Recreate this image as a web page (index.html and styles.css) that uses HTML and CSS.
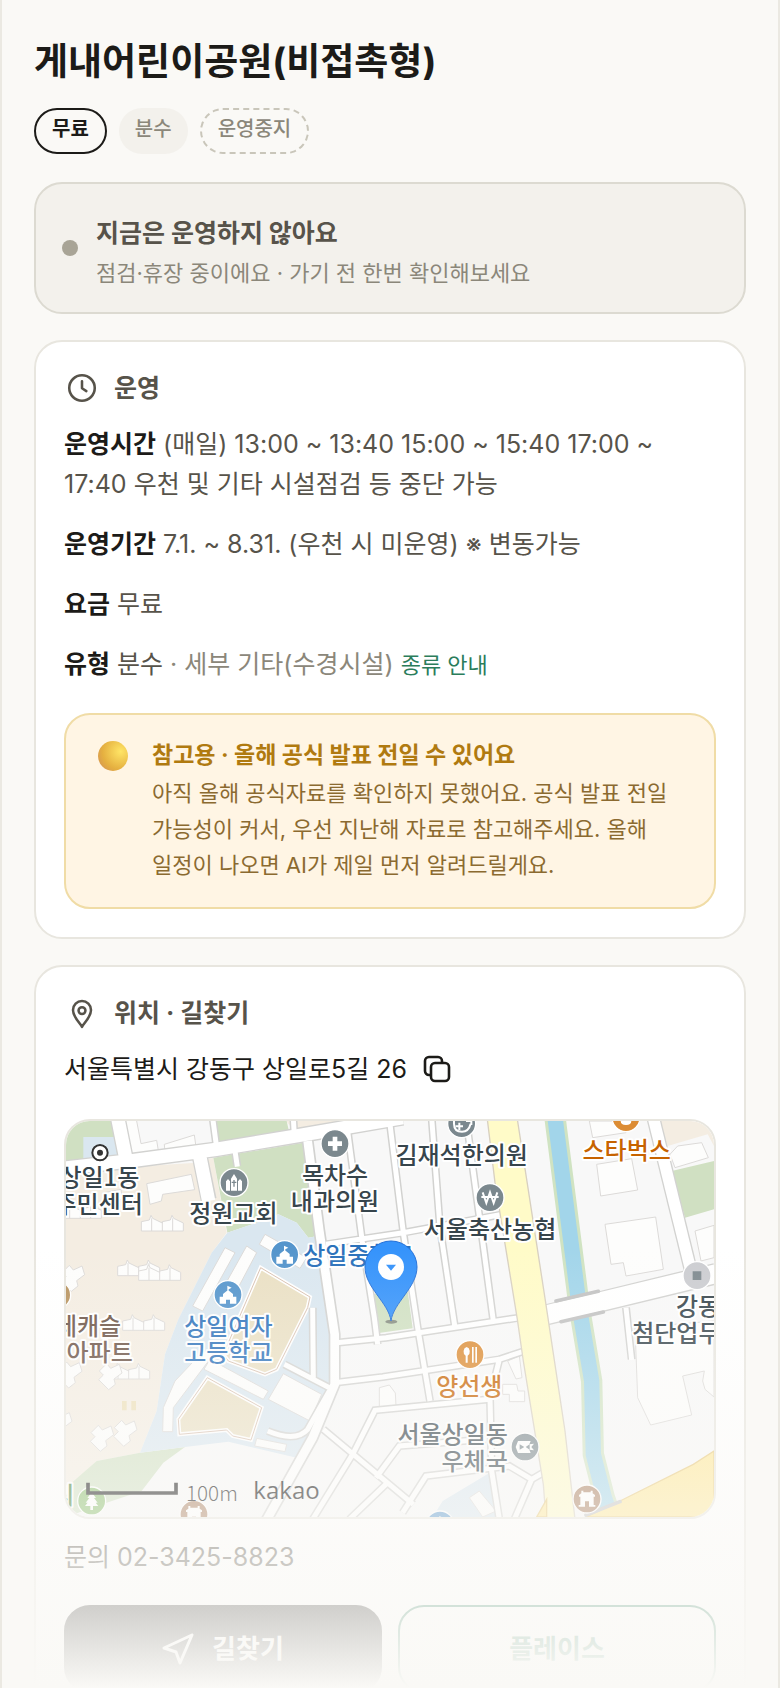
FILE: index.html
```html
<!DOCTYPE html>
<html lang="ko">
<head>
    <meta charset="UTF-8">
    <meta name="viewport" content="width=device-width, initial-scale=1.0">
    <title>게내어린이공원(비접촉형)</title>
    <link rel="stylesheet" href="styles.css">
</head>
<body>
    <main class="page">
        <h1>게내어린이공원(비접촉형)</h1>
        <div class="tags">
            <span class="tag tag-free">무료</span>
            <span class="tag tag-type">분수</span>
            <span class="tag tag-closed">운영중지</span>
        </div>

        <!-- Current status -->
        <section class="status">
            <span class="status-dot"></span>
            <div>
                <h2 class="status-title">지금은 운영하지 않아요</h2>
                <p class="status-text">점검·휴장 중이에요 · 가기 전 한번 확인해보세요</p>
            </div>
        </section>

        <!-- Opening info -->
        <section class="card">
            <h2 class="card-title">
                <svg class="icon" viewBox="0 0 24 24"><circle cx="12" cy="12" r="8.5"/><path d="M12 7.5v4.7l2.9 1.9"/></svg>
                운영
            </h2>
            <p class="row"><b>운영시간</b> (매일) 13:00 ~ 13:40 15:00 ~ 15:40 17:00 ~ 17:40 우천 및 기타 시설점검 등 중단 가능</p>
            <p class="row"><b>운영기간</b> 7.1. ~ 8.31. (우천 시 미운영) ※ 변동가능</p>
            <p class="row"><b>요금</b> 무료</p>
            <p class="row"><b>유형</b> 분수 <span class="muted">· 세부 기타(수경시설)</span> <a class="type-link" href="#types">종류 안내</a></p>

            <div class="notice">
                <span class="orb"></span>
                <div>
                    <h3 class="notice-title">참고용 · 올해 공식 발표 전일 수 있어요</h3>
                    <p class="notice-text">아직 올해 공식자료를 확인하지 못했어요. 공식 발표 전일 가능성이 커서, 우선 지난해 자료로 참고해주세요. 올해 일정이 나오면 AI가 제일 먼저 알려드릴게요.</p>
                </div>
            </div>
        </section>

        <!-- Location -->
        <section class="card">
            <h2 class="card-title">
                <svg class="icon" viewBox="0 0 24 24"><path d="M12 21.2c-1.6-2.8-6-6.6-6-11.2a6 6 0 0 1 12 0c0 4.6-4.4 8.4-6 11.2z"/><circle cx="12" cy="10.4" r="2.3"/></svg>
                위치 · 길찾기
            </h2>
            <div class="address">
                <span>서울특별시 강동구 상일로5길 26</span>
                <button class="copy" type="button" aria-label="주소 복사">
                    <svg viewBox="0 0 28 28"><path d="M7.5 20H6a4 4 0 0 1-4-4V6a4 4 0 0 1 4-4h9a4 4 0 0 1 4 4v1.5"/><rect x="8" y="8" width="18" height="18" rx="4"/></svg>
                </button>
            </div>

            <div class="map">
                <svg viewBox="0 0 1944 1188" preserveAspectRatio="xMidYMid slice" role="img" aria-label="지도">
                    <defs>
                        <g id="church"><path d="M-24 24V-4l6-7 6 7v28zM12 24V-4l6-7 6 7v28zM-9 24v-36l9-14 9 14v36z"/></g>
                        <g id="school"><path d="M-25 24V3h10v-8L0-17 15-5V3h10v21H6V12H-6v12zM-2-15v-15l13 6-9 5v4z"/></g>
                        <g id="house"><path d="M-25 23v-5h5V-7h-4v-5l7-5v-8h6v5h22v-5h6v8l7 5v5h-4v25h5v5H6V7H-6v16z"/></g>
                        <path id="homes" d="M0 30V2l24-5 5-14 5 9 29 14V2l24-5 5-14 5 9 29 14v24zM31-8v38M63 2v28M94-8v38"/>
                        <path id="cross-home" d="M0 15l22-22 12 14 26-12 8 26-24 18 4 16-20 16-30-30 14-14z"/>
                    </defs>

                    <rect class="ground" width="1944" height="1188"/>

                    <!-- Land use -->
                    <path class="beige" d="M0 150L392 125 442 110 482 335 437 395 337 595 297 700 272 870 222 995 92 1020 0 1110zM660 0H892L690 35zM1777 0H1944V75L1925 40 1805 75z"/>
                    <path class="green" d="M0 0H137L157 115 0 130zM437 0H662L670 35 452 70zM442 110L712 65 755 345 727 350 692 305 637 280 572 305 484 335zM357 978L222 995 92 1020 0 1100V1188L122 1145 227 1110 292 1025zM915 520L1025 510 1040 622 938 636zM1817 150L1944 120V265L1857 290z"/>
                    <path class="blue" d="M52 48H145L157 120 52 125zM484 335L572 305 637 280 692 305 727 350 755 345 802 615 812 790 780 860 692 1010 487 962 357 978 222 995 272 870 297 700 337 595 437 395zM1100 1188L1130 1140 1280 1050 1290 1188z"/>

                    <!-- Buildings -->
                    <g class="building">
                        <path d="M170 0L200 108 278 95 272 58 225 68 212 0M295 70L385 42 390 78 297 95zM242 188L376 160 386 206 290 220 286 240 252 250zM115 215L165 205 168 235 120 245z"/>
                        <path d="M477 380L507 395 410 570 380 555zM542 375L572 395 482 565 447 545zM597 340L722 410 702 442 580 370zM412 690L327 780 292 860 290 932H320L322 860 450 690zM432 715L607 810 592 835 414 745zM652 758L767 820 732 900 607 835zM572 952L662 970 657 992 566 975z"/>
                        <path d="M1592 130L1697 113 1715 207 1604 225zM1617 310L1769 288 1792 445 1680 465 1672 425 1635 430zM1570 0L1580 50 1680 35 1670 0zM1812 100L1835 75 1907 65 1927 110 1827 140zM1887 330L1944 313V410L1905 420zM1707 620L1715 830 1754 912 1877 882 1850 765 1915 750 1910 780 1917 805 1944 828V600z"/>
                        <path d="M1310 790h42l4 20h20v32h-46v-22h-20zM1325 720l35-16 8 66-18 4zM940 800l30-8 18 24 2 40-50 8zM1210 1130l30-20 50 60-40 18z"/>
                    </g>
                    <g class="building">
                        <use href="#homes" x="226" y="300"/>
                        <use href="#homes" x="155" y="434"/>
                        <use href="#homes" x="218" y="448"/>
                        <use href="#homes" x="-20" y="262"/>
                        <use href="#homes" x="170" y="598"/>
                        <use href="#homes" x="125" y="744"/>
                        <use href="#cross-home" x="100" y="735"/>
                        <use href="#cross-home" x="-12" y="440"/>
                        <use href="#cross-home" x="-20" y="730"/>
                        <use href="#cross-home" x="-50" y="880"/>
                        <use href="#cross-home" x="75" y="920"/>
                        <use href="#cross-home" x="145" y="905"/>
                    </g>
                    <path class="bench" d="M168 840h14v28h-14zM196 840h14v28h-14z"/>

                    <!-- School fields -->
                    <g class="field">
                        <path d="M584 440L732 528 725 560 632 745 597 760 487 720 472 700z"/>
                        <path d="M424 770L587 860 555 957 500 945 482 927 340 940 337 895z"/>
                    </g>
                    <g class="field-line">
                        <path d="M584 440L732 528 725 560 632 745 597 760 487 720 472 700z"/>
                        <path d="M424 770L587 860 555 957 500 945 482 927 340 940 337 895z"/>
                    </g>

                    <!-- Roads: grey casing first, white surface on top -->
                    <g class="casing">
                        <path stroke-width="48" d="M-10 142L190 120 450 85 690 45 1010-10M155-10L182 125M402 110L428 236"/>
                        <path stroke-width="36" d="M725 60L760 330 806 640V790L740 950 600 1200"/>
                        <path stroke-width="24" d="M440-10L452 80M682-10L685 45M507 90L514 135M845 30L890 370 925 590 935 670M972 10L1012 335 1055 620 1092 840M1097-10L1122 320 1167 620M1200-10L1242 300 1282 600M780 370L1012 335 1310 280M812 665L960 650 1360 590M805 785L950 768 1300 715 1375 690M740 1195L860 1000 927 868 1270 835M772 925L1042 1150M1300 715L1272 830 1277 1050 1300 1195M930 1070L1000 975 1260 955M1010 1175L1080 1065 1330 1035 1397 1075 1440 1050M1397 1075L1345 1195M965 1085L850 1195M1680 560L1697 715M740 560L742 780M655 730L790 800M605 930Q690 965 725 925L790 810"/>
                        <path stroke-width="64" d="M1440 582L1950 458"/>
                        <path stroke-width="42" d="M1762-10L1875 450"/>
                    </g>
                    <g class="road">
                        <path stroke-width="40" d="M-10 142L190 120 450 85 690 45 1010-10M155-10L182 125M402 110L428 240"/>
                        <path stroke-width="26" d="M725 60L760 330 806 640V790L740 950 600 1200"/>
                        <path stroke-width="15" d="M440-10L452 80M682-10L685 45M507 90L514 137M845 30L890 370 925 590 935 670M972 10L1012 335 1055 620 1092 840M1097-10L1122 320 1167 620M1200-10L1242 300 1282 600M780 370L1012 335 1310 280M812 665L960 650 1360 590M805 785L950 768 1300 715 1375 690M740 1195L860 1000 927 868 1270 835M772 925L1042 1150M1300 715L1272 830 1277 1050 1300 1195M930 1070L1000 975 1260 955M1010 1175L1080 1065 1330 1035 1397 1075 1440 1050M1397 1075L1345 1195M965 1085L850 1195M1680 560L1697 717M740 560L742 780M655 730L790 800M605 930Q690 965 725 925L790 810"/>
                    </g>

                    <!-- River, avenue and bridge -->
                    <path class="river-bank" d="M1467-10L1540 560 1577 780 1582 1000 1615 1130 1640 1200"/>
                    <path class="river" d="M1467-10L1540 560 1577 780 1582 1000 1615 1130 1640 1200"/>
                    <g class="road">
                        <path stroke-width="56" d="M1430 584L1950 458"/>
                        <path stroke-width="34" d="M1762-10L1875 450"/>
                    </g>
                    <path class="avenue" d="M1264-5H1354L1382 175 1439 545 1497 930 1527 1195H1440L1432 1090 1372 720 1354 595 1287 185z"/>
                    <path class="highway" d="M1662 1140L1882 1030 1944 990V1188H1560zM1442 1135L1412 1188H1442z"/>
                    <path class="bridge" d="M1470 540L1597 511M1485 602L1612 573M1560 1182L1662 1142"/>

                    <!-- Places -->
                    <g class="poi">
                        <circle class="poi-grey" cx="807" cy="68" r="42"/>
                        <path d="M800 47h14v14h14v14h-14v14h-14V75h-14V61h14z"/>
                        <circle class="poi-grey" cx="504" cy="185" r="42"/>
                        <use href="#church" x="504" y="185"/>
                        <path class="church-cross" d="M504 177v20M497 184h14"/>
                        <circle class="poi-blue" cx="656" cy="401" r="42"/>
                        <use href="#school" x="656" y="404"/>
                        <circle class="poi-blue" cx="486" cy="521" r="42"/>
                        <use href="#school" x="486" y="524"/>
                        <circle class="poi-blue" cx="1122" cy="1212" r="42"/>
                        <use href="#school" x="1122" y="1215"/>
                        <circle class="poi-tan" cx="-28" cy="522" r="42"/>
                        <circle class="poi-grey" cx="1187" cy="8" r="42"/>
                        <path class="line" d="M1164-4v12q0 24 24 24 20 0 26-24M1200 0h16v12M1180 5v22M1169 16h22"/>
                        <circle class="poi-orange" cx="1680" cy="-10" r="42"/>
                        <path d="M1664-10h32v10q0 12-16 12t-16-12z"/>
                        <circle class="poi-grey" cx="1272" cy="230" r="42"/>
                        <path class="line" d="M1250 214l11 32 11-32 11 32 11-32M1246 228h52"/>
                        <circle class="poi-light" cx="1893" cy="464" r="42"/>
                        <path class="square" d="M1880 451h26v26h-26z"/>
                        <circle class="poi-orange" cx="1212" cy="701" r="42"/>
                        <path d="M1202 678a12 14 0 0 1 3 26v21h-6v-21a12 14 0 0 1 3-26zM1218 678h5v47h-5zM1228 678h5v47h-5z"/>
                        <circle class="poi-grey" cx="1377" cy="978" r="42"/>
                        <path fill-rule="evenodd" d="M1356 960h38l-4 10 14-2-8 10 8 10-14-2 4 10h-38l-7-18zM1361 970v16l14-8zM1391 970v16l-12-8z"/>
                        <circle class="poi-brown" cx="1563" cy="1134" r="42"/>
                        <use href="#house" x="1563" y="1134"/>
                        <circle class="poi-brown" cx="384" cy="1180" r="42"/>
                        <use href="#house" x="384" y="1180"/>
                        <circle class="poi-green" cx="77" cy="1140" r="42"/>
                        <path d="M77 1114l13 17h-6l11 14h-6l8 10H81v12h-8v-12H57l8-10h-6l11-14h-6z"/>
                        <circle class="target" cx="102" cy="95" r="23"/>
                        <circle class="target-dot" cx="102" cy="95" r="9"/>
                    </g>
                    <g class="label">
                        <text x="100" y="195">상일1동</text>
                        <text x="98" y="275">주민센터</text>
                        <text x="807" y="188">목차수</text>
                        <text x="807" y="266">내과의원</text>
                        <text x="502" y="302">정원교회</text>
                        <text x="1187" y="130">김재석한의원</text>
                        <text x="1272" y="350">서울축산농협</text>
                        <text x="1896" y="582">강동</text>
                        <text x="1831" y="664">첨단업무</text>
                        <text x="1160" y="967">서울상일동</text>
                        <text x="1226" y="1047">우체국</text>
                        <text class="label-orange" x="1682" y="115">스타벅스</text>
                        <text class="label-orange" x="1210" y="822">양선생</text>
                        <text class="label-blue" x="877" y="428">상일중학교</text>
                        <text class="label-blue" x="487" y="641">상일여자</text>
                        <text class="label-blue" x="487" y="720">고등학교</text>
                        <text class="label-brown" x="66" y="641">데캐슬</text>
                        <text class="label-brown" x="101" y="720">아파트</text>
                        <text class="label-green" x="-8" y="1150">리</text>
                    </g>

                    <!-- Marker -->
                    <ellipse class="pin-shadow" cx="976" cy="602" rx="18" ry="6"/>
                    <path class="pin" d="M975 600C968 545 897 500 897 438a78 78 0 0 1 156 0C1053 500 982 545 975 600z"/>
                    <circle class="pin-hole" cx="975" cy="438" r="39"/>
                    <path class="pin-arrow" d="M960 431h30l-15 18z"/>

                    <path class="scale" d="M66 1085V1116H330V1085"/>
                    <text class="scale-text" x="360" y="1141">100m</text>
                    <text class="brand" x="562" y="1134">kakao</text>
                </svg>
            </div>

            <p class="contact">문의 02-3425-8823</p>
            <div class="actions">
                <a class="action action-route" href="#route">
                    <svg viewBox="0 0 32 32"><path d="M30 2L2 15l12 4 4 11z"/></svg>
                    길찾기
                </a>
                <a class="action action-place" href="#place">플레이스</a>
            </div>
        </section>
        <div class="fade"></div>
    </main>
</body>
</html>
```
FILE: styles.css
```css
* {
    box-sizing: border-box;
}
body {
    margin: 0;
    background-color: #faf9f6;
    color: #1c1b18;
    font-family: Inter, "Noto Sans CJK KR", sans-serif;
    font-size: 25px;
    line-height: 40px;
    word-break: keep-all;
}
h1, h2, h3, p {
    margin: 0;
}
.page {
    position: relative;
    height: 100vh;
    overflow: hidden;
    padding: 40px 32px 0;
    border-left: 2px solid #ebe9e2;
    border-right: 2px solid #ebe9e2;
}
h1 {
    font-size: 37px;
    line-height: 44px;
    font-weight: 700;
}

/* Tags */
.tags {
    display: flex;
    gap: 12px;
    margin-top: 24px;
}
.tag {
    height: 46px;
    padding: 6px 16px;
    border: 2px solid #1c1b18;
    border-radius: 23px;
    font-size: 20px;
    line-height: 26px;
}
.tag-free {
    font-weight: 700;
}
.tag-type {
    padding: 8px 16px;
    border: none;
    background-color: #f3f1ec;
    color: #8b877a;
    font-weight: 500;
}
.tag-closed {
    border: 2px dashed #c9c6ba;
    color: #8b877a;
    font-weight: 500;
}

/* Status */
.status {
    display: flex;
    align-items: center;
    gap: 18px;
    margin-top: 28px;
    padding: 24px 26px;
    border: 2px solid #dcdad1;
    border-radius: 28px;
    background-color: #f3f1ec;
}
.status-dot {
    width: 16px;
    height: 16px;
    border-radius: 50%;
    background-color: #a8a496;
}
.status-title {
    font-size: 25px;
    line-height: 50px;
    font-weight: 700;
    color: #57534a;
}
.status-text {
    font-size: 22px;
    line-height: 30px;
    color: #8b877a;
}

/* Cards */
.card {
    margin-top: 26px;
    padding: 24px 28px 28px;
    border: 2px solid #e8e6df;
    border-radius: 28px;
    background-color: #fff;
}
.card-title {
    display: flex;
    align-items: center;
    gap: 14px;
    height: 44px;
    margin-bottom: 14px;
    font-size: 25px;
    font-weight: 700;
    color: #57534a;
}
.icon {
    width: 36px;
    height: 36px;
    fill: none;
    stroke: #57534a;
    stroke-width: 1.7;
    stroke-linecap: round;
    stroke-linejoin: round;
}
.row {
    margin-bottom: 20px;
    color: #57534a;
}
.row b {
    color: #1c1b18;
}
.muted {
    color: #8b877a;
}
.type-link {
    font-size: 22px;
    color: #2b7d5b;
    text-decoration: none;
}

/* Notice */
.notice {
    display: flex;
    gap: 24px;
    margin-top: 28px;
    padding: 20px 30px 24px 32px;
    border: 2px solid #f0dca6;
    border-radius: 26px;
    background-color: #fff5e4;
}
.orb {
    flex-shrink: 0;
    width: 30px;
    height: 30px;
    margin-top: 6px;
    border-radius: 50%;
    background: radial-gradient(circle at 75% 35%, #ffe566, #e5b040 60%, #cf8a5a);
}
.notice-title {
    font-size: 23px;
    line-height: 40px;
    font-weight: 700;
    color: #b07a10;
}
.notice-text {
    font-size: 22px;
    line-height: 36px;
    color: #8b6a30;
}

/* Location */
.address {
    display: flex;
    align-items: center;
    gap: 16px;
}
.copy {
    width: 28px;
    height: 28px;
    padding: 0;
    border: none;
    background: none;
    cursor: pointer;
}
.copy svg {
    display: block;
    fill: none;
    stroke: #1c1b18;
    stroke-width: 2.6;
    stroke-linecap: round;
}
.map {
    height: 400px;
    margin-top: 30px;
    overflow: hidden;
    border: 2px solid #e8e6df;
    border-radius: 26px;
}
.map svg {
    display: block;
    width: 100%;
    height: 100%;
}
.ground { fill: #f8f8f8; }
.beige { fill: #f4ede2; }
.green { fill: #d0e0c2; }
.blue { fill: #dae7f0; }
.bench { fill: #ecdfb8; }
.building {
    fill: #fdfdfc;
    stroke: #dcdad8;
    stroke-width: 3;
}
.field {
    fill: #eae0c4;
    stroke: #fff;
    stroke-width: 12;
}
.field-line {
    fill: none;
    stroke: #d8c0b0;
    stroke-width: 3;
}
.casing {
    fill: none;
    stroke: #d2d2d0;
}
.road {
    fill: none;
    stroke: #fff;
}
.river-bank {
    fill: none;
    stroke: #d0e3c2;
    stroke-width: 64;
}
.river {
    fill: none;
    stroke: #a2d5ea;
    stroke-width: 46;
}
.avenue {
    fill: #fffbc8;
    stroke: #d8d0c0;
    stroke-width: 4;
}
.highway {
    fill: #ffe896;
    stroke: #e8c878;
    stroke-width: 4;
}
.bridge {
    fill: none;
    stroke: #c2c2c2;
    stroke-width: 11;
    stroke-linecap: round;
}
.poi {
    fill: #fff;
}
.poi circle {
    stroke: #fff;
    stroke-width: 4;
}
.poi .line {
    fill: none;
    stroke: #fff;
    stroke-width: 6;
}
.church-cross {
    stroke: #7b888e;
    stroke-width: 4;
}
.poi-grey { fill: #7b888e; }
.poi-blue { fill: #5595cc; }
.poi-tan { fill: #b8935f; }
.poi-orange { fill: #dc8c34; }
.poi-light { fill: #cccdd1; }
.poi-brown { fill: #a87c5c; }
.poi-green { fill: #86bc68; }
.square { fill: #808b90; }
.poi .target {
    stroke: #333;
    stroke-width: 6;
}
.poi .target-dot {
    fill: #333;
    stroke: none;
}
.label {
    font-family: "Noto Sans CJK KR", sans-serif;
    font-size: 72px;
    font-weight: 500;
    text-anchor: middle;
    fill: #37454c;
    stroke: #fff;
    stroke-width: 12;
    stroke-linejoin: round;
    paint-order: stroke;
}
.label-orange { fill: #c76300; }
.label-blue { fill: #2c72bb; }
.label-brown { fill: #6a5144; }
.label-green { fill: #3a7a30; }
.pin {
    fill: #3593fb;
    stroke: #2470d8;
    stroke-width: 3;
}
.pin-shadow {
    fill: #555;
    opacity: 0.6;
}
.pin-hole { fill: #fff; }
.pin-arrow { fill: #3593fb; }
.scale {
    fill: none;
    stroke: #111;
    stroke-width: 11;
}
.scale-text {
    font-family: "Noto Sans CJK KR", sans-serif;
    font-size: 62px;
    font-weight: 300;
}
.brand {
    font-family: "Open Sans", sans-serif;
    font-size: 72px;
}
.contact {
    margin-top: 18px;
    color: #57534a;
}
.actions {
    display: flex;
    gap: 16px;
    margin-top: 28px;
}
.action {
    display: flex;
    flex: 1;
    align-items: center;
    justify-content: center;
    gap: 18px;
    height: 88px;
    border: 2px solid #1c1b18;
    border-radius: 26px;
    font-size: 26px;
    font-weight: 700;
    text-decoration: none;
}
.action svg {
    width: 32px;
    height: 32px;
    fill: none;
    stroke: #fff;
    stroke-width: 3;
    stroke-linejoin: round;
}
.action-route {
    background-color: #1c1b18;
    color: #fff;
}
.action-place {
    border-color: #2b7d5b;
    color: #2b7d5b;
}

/* Bottom fade over the page */
.fade {
    position: absolute;
    left: -2px;
    right: -2px;
    bottom: 0;
    height: 440px;
    background: linear-gradient(rgba(250, 249, 246, 0), #faf9f6);
    pointer-events: none;
}
```
